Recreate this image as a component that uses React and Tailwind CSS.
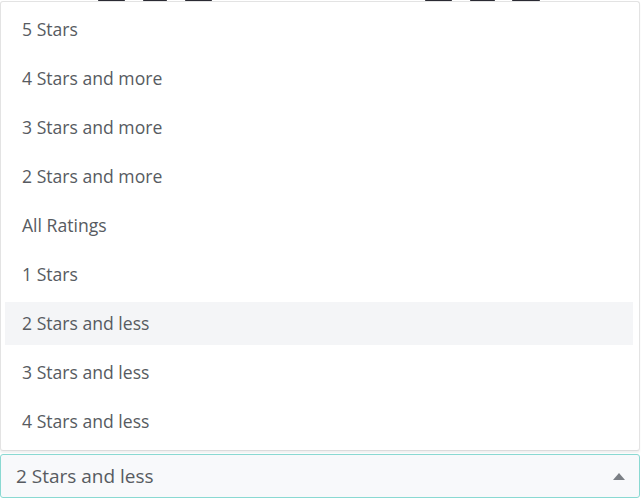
import { useState } from 'react';

const options = [
  '5 Stars',
  '4 Stars and more',
  '3 Stars and more',
  '2 Stars and more',
  'All Ratings',
  '1 Stars',
  '2 Stars and less',
  '3 Stars and less',
  '4 Stars and less',
];

export default function App() {
  const [selected, setSelected] = useState('2 Stars and less');

  return (
    <div className="w-[641px] h-[498px] bg-white flex flex-col" style={{ fontFamily: '"Open Sans", "Noto Sans", sans-serif' }}>
      {/* bits of the page behind the open menu */}
      <div className="h-[1px] flex items-start pl-[98px]">
        <div className="w-[27px] h-[2px] bg-[#2a2a33] rounded-b shrink-0" />
        <div className="ml-[18px] w-[24px] h-[2px] bg-[#2a2a33] rounded-b shrink-0" />
        <div className="ml-[18px] w-[27px] h-[2px] bg-[#2a2a33] rounded-b shrink-0" />
        <div className="ml-[213px] w-[27px] h-[2px] bg-[#2a2a33] rounded-b shrink-0" />
        <div className="ml-[18px] w-[25px] h-[2px] bg-[#2a2a33] rounded-b shrink-0" />
        <div className="ml-[17px] w-[28px] h-[2px] bg-[#2a2a33] rounded-b shrink-0" />
      </div>

      <div className="w-[640px] h-[450px] border border-[#e3e3e3] border-b-[#dcdcdc] rounded-[3px] bg-white pt-[6px] pl-[4px] pr-[6px] flex flex-col gap-[6px] shadow-[0_2px_2px_rgba(0,0,0,0.06)] relative z-10">
        {options.map((opt) => (
          <div
            key={opt}
            onClick={() => setSelected(opt)}
            className={
              'h-[43px] pl-[17px] flex items-center text-[17.6px] text-[#575b61] cursor-pointer ' +
              (opt === selected ? 'bg-[#f4f5f7]' : '')
            }
          >
            {opt}
          </div>
        ))}
      </div>

      <div className="mt-[3px] w-[640px] h-[44px] border border-[#8ad9d2] rounded-[3px] bg-[#f8f9fb] pl-[15px] pr-[14px] flex items-center justify-between">
        <span className="text-[19px] text-[#575b61]">{selected}</span>
        <svg width="12" height="7" viewBox="0 0 12 7">
          <path d="M0 7 L6 0 L12 7 Z" fill="#7b7f85" />
        </svg>
      </div>
    </div>
  );
}
